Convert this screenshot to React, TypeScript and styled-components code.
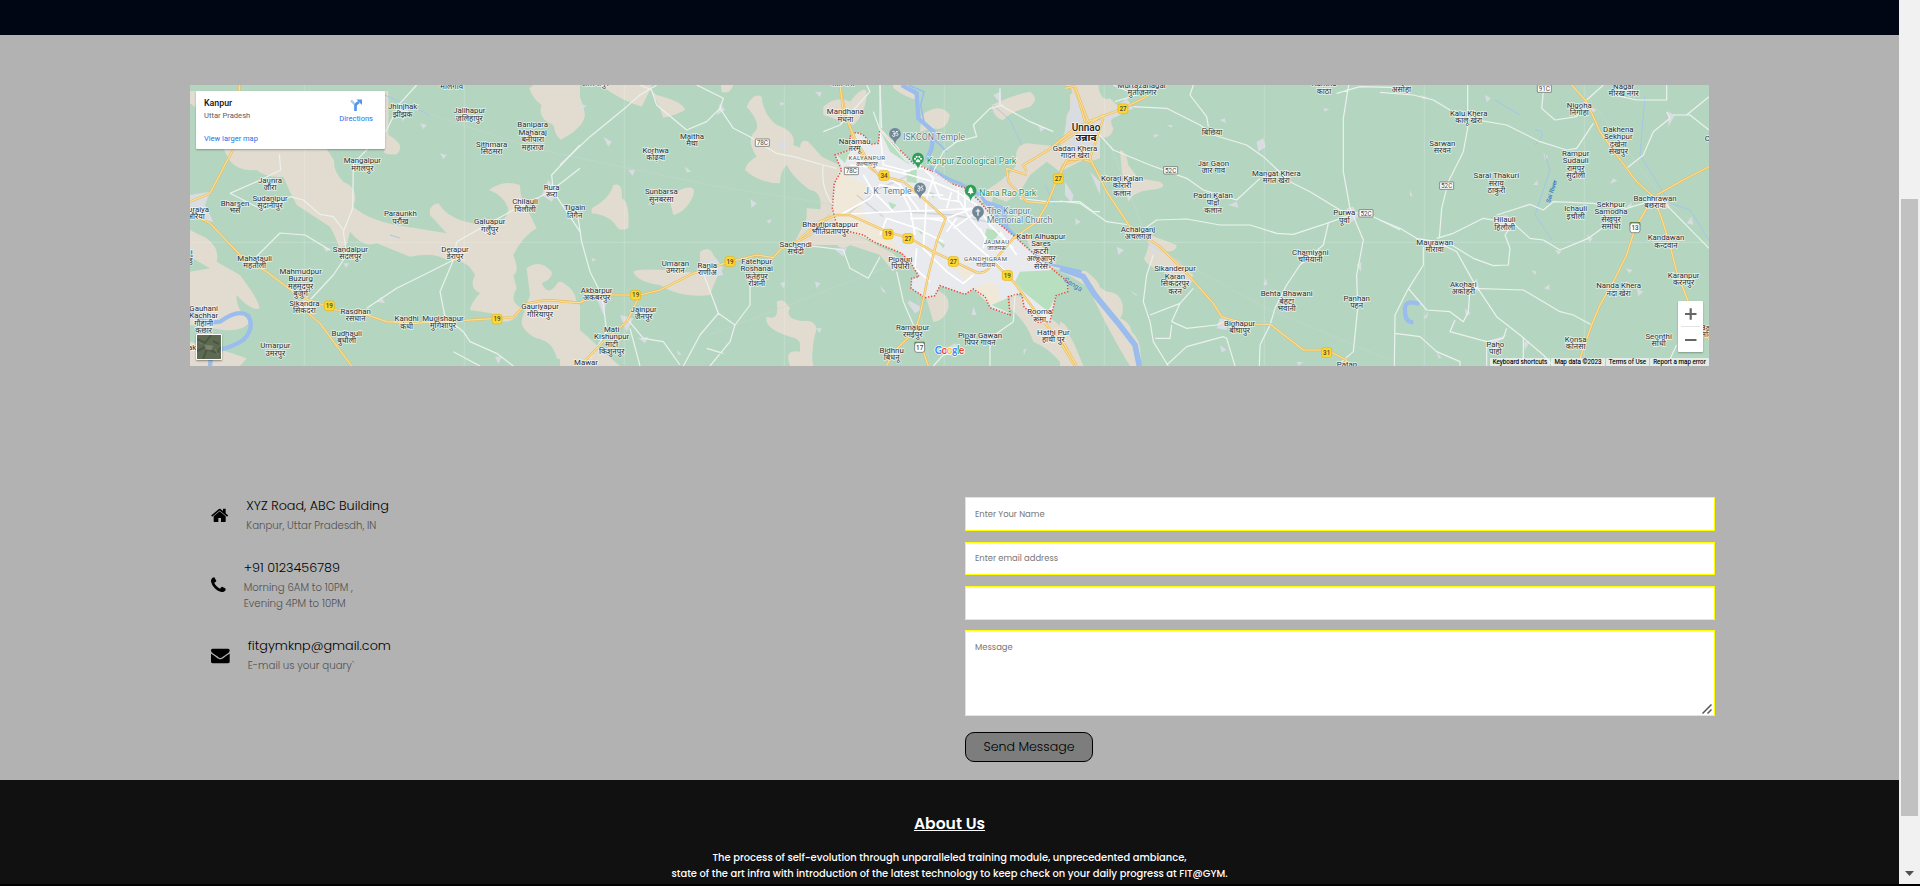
import React from 'react';
import styled, { createGlobalStyle } from 'styled-components';

const GlobalStyle = createGlobalStyle`
  * { box-sizing: border-box; }
  html, body { margin: 0; padding: 0; height: 886px; overflow: hidden; background: #000; }
  body, input, textarea, button {
    font-family: Poppins, Inter, "Liberation Sans", sans-serif;
    font-feature-settings: "cv11";
  }
`;

const Window = styled.div`
  display: grid;
  grid-template-columns: 1899px 21px;
  height: 884px;
  width: 1920px;
  overflow: hidden;
`;
const Page = styled.div`
  background: #b2b2b2;
  height: 884px;
  overflow: hidden;
  display: flex;
  flex-direction: column;
`;
const Hero = styled.div`
  height: 35px;
  flex: none;
  background: #000613;
`;
const Scrollbar = styled.div`
  background: #f1f1f1;
  display: flex;
  flex-direction: column;
  align-items: center;
  justify-content: space-between;
  padding: 199px 0 8px;
  svg { display: block; }
`;
const Thumb = styled.div`
  width: 17px;
  height: 617px;
  background: #c1c1c1;
`;
const MapFrame = styled.section`
  position: relative;
  flex: none;
  width: 1519px;
  height: 281px;
  margin: 50px 0 0 190px;
  overflow: hidden;
`;
const MapSvg = styled.svg`
  display: block;
  font-family: Roboto, "Noto Sans", "Noto Sans Devanagari", sans-serif;
`;
const PlaceCard = styled.div`
  position: absolute;
  left: 6px;
  top: 6px;
  width: 189px;
  height: 58px;
  background: #fff;
  border-radius: 1px;
  box-shadow: 0 1px 2px rgba(0, 0, 0, 0.3);
  padding: 7px 12px 0 8px;
  display: flex;
  justify-content: space-between;
  font-family: Roboto, sans-serif;
`;
const PlaceInfo = styled.div`
  display: flex;
  flex-direction: column;
  font-size: 7.6px;
  line-height: 10px;
  color: #5b5b5b;
`;
const PlaceName = styled.strong`
  font-size: 8.8px;
  line-height: 11px;
  font-weight: 500;
  color: #111;
  margin-bottom: 2px;
`;
const MapLink = styled.a`
  color: #1a73e8;
  font-size: 7.5px;
  line-height: 10px;
`;
const LargerLink = styled(MapLink)`
  margin-top: 13px;
`;
const Directions = styled.div`
  display: flex;
  flex-direction: column;
  align-items: center;
  padding-top: 1px;
  gap: 3px;
  svg { display: block; }
`;
const Satellite = styled.div`
  position: absolute;
  left: 6px;
  top: 249px;
  width: 26px;
  height: 26px;
  border: 1px solid #fff;
  border-radius: 1px;
  box-shadow: 0 1px 2px rgba(0, 0, 0, 0.4);
  svg { display: block; }
`;
const ZoomControl = styled.div`
  position: absolute;
  right: 6px;
  top: 216px;
  width: 25px;
  height: 51px;
  background: #fff;
  border-radius: 1px;
  box-shadow: 0 1px 2px rgba(0, 0, 0, 0.3);
  svg { display: block; }
`;
const Attribution = styled.div`
  position: absolute;
  right: 0;
  bottom: 0;
  height: 8px;
  display: flex;
  gap: 1px;
  font-family: Roboto, sans-serif;
  font-size: 6.3px;
  line-height: 8px;
  color: #000;
  -webkit-text-stroke: 0.1px #000;
  white-space: nowrap;
`;
const AttributionItem = styled.span<{ $w: number }>`
  width: ${(p) => p.$w}px;
  text-align: center;
  background: rgba(245, 245, 245, 0.72);
`;
const Contact = styled.section`
  display: grid;
  grid-template-columns: 775px 750px;
  margin: 129px 0 0 190px;
  height: 285px;
  flex: none;
`;
const Details = styled.div`
  padding: 1px 0 0 21px;
`;
const Detail = styled.div<{ $after: number }>`
  display: flex;
  align-items: center;
  gap: 18px;
  margin-bottom: ${(p) => p.$after}px;
`;
const Glyph = styled.svg`
  display: block;
  height: 18.7px;
  flex: none;
`;
const DetailTitle = styled.h5`
  margin: 0 0 2px;
  font-size: 12.75px;
  line-height: 20px;
  font-weight: 300;
  color: #000;
`;
const DetailText = styled.p`
  margin: 0;
  font-size: 10.2px;
  line-height: 16px;
  font-weight: 300;
  color: #505050;
  white-space: pre;
`;
const Form = styled.form`
  display: flex;
  flex-direction: column;
  align-items: flex-start;
  padding-top: 2px;
`;
const Field = styled.input<{ $h: number; $after: number }>`
  display: block;
  width: 750px;
  height: ${(p) => p.$h}px;
  margin: 0 0 ${(p) => p.$after}px;
  padding: 0 9px;
  border: 1px solid #ff0;
  outline: 0;
  background: #fff;
  font-size: 8.4px;
  &::placeholder { color: #757575; }
`;
const Message = styled.textarea`
  display: block;
  width: 750px;
  height: 86px;
  margin: 0 0 16px;
  padding: 10px 9px;
  border: 1px solid #ff0;
  outline: 0;
  background: #fff;
  font-size: 8.4px;
  line-height: 13px;
  resize: none;
  &::placeholder { color: #757575; }
`;
const MessageBox = styled.div`
  position: relative;
`;
const Grip = styled.svg`
  position: absolute;
  right: 3px;
  top: 74px;
`;
const Send = styled.button`
  width: 128px;
  height: 30px;
  padding: 0;
  border: 1px solid #000;
  border-radius: 9px;
  background: #7d7d7d;
  color: #000;
  font-size: 12.6px;
  font-weight: 300;
`;
const Footer = styled.footer`
  flex: 1;
  background: #111;
  color: #fff;
  text-align: center;
`;
const FooterTitle = styled.h3`
  margin: 31px 0 14px;
  font-size: 15.6px;
  line-height: 25px;
  font-weight: 600;
  text-decoration: underline;
`;
const FooterLine = styled.p`
  margin: 0;
  font-size: 9.92px;
  line-height: 16px;
  font-weight: 500;
`;

type LabelData = [number, number, string];
interface RegionData {
  x: number;
  land: string;
  town: string;
  water: string;
  minor: string;
  major: string;
  labels: LabelData[];
  shields: LabelData[];
}

/* Each region is drawn in units of a third of a pixel from its own left edge. */
const regions: RegionData[] = [
  {
    x: -10,
    land:
      'M30 85L75 118L120 200L140 240Q160 290 230 285Q260 310 310 305L330 350L350 390L450 455Q470 490 478 520L500 510L510 470Q550 520 590 505L690 545Q760 530 800 555Q860 550 885 600Q865 640 900 655Q875 680 870 705L935 715L960 740Q1010 745 1025 700Q985 680 1010 640L1000 600Q1020 590 1000 540Q1030 480 1070 460L1040 400Q1020 370 1020 330Q970 312 927 345Q970 360 985 400Q980 450 920 455L850 438Q800 425 775 385Q745 390 750 420L800 475L680 455Q570 440 520 395Q540 340 490 320Q460 290 462 255L440 222H615Q600 240 650 238Q680 210 625 180V48H30Z' +
      'M1048 40Q1060 75 1085 90Q1070 130 1120 150Q1130 200 1150 190L1200 130V30H1060Z' +
      'M30 465L80 490Q120 520 110 560L180 600Q240 680 238 700Q215 710 170 660Q165 700 210 740Q190 770 130 765L30 750V590L90 580L30 545ZM30 800Q150 830 200 850L180 873H30Z' +
      'M1040 580Q1080 550 1115 590Q1120 610 1085 625Q1105 670 1135 620Q1170 620 1145 655L1200 690V873L1130 850Q1120 800 1070 790Q1010 760 1030 720L1050 660Z',
    town: 'M30 360L90 350L75 390L100 440L30 430ZM655 85L690 95L668 140ZM1105 315L1135 350L1115 380L1085 360ZM350 700L380 660L400 720ZM590 680L605 665L615 685ZM780 235L800 240L790 252ZM720 145L740 150L730 162ZM490 565H508L498 578ZM945 845H965L955 868ZM430 515L455 523L438 530Z',
    water: 'M30 705Q60 750 120 740Q175 700 205 722Q225 760 190 795Q150 820 110 825Q90 840 90 873',
    minor:
      'M710 30L660 85L620 165L540 245L520 270L518 400L490 470L500 540L460 600L390 675L360 700M150 355L250 405L330 365L370 375L420 418L460 425L490 465M150 355L230 320L302 285L298 238M224 550L300 474L375 480L450 525M560 700L650 640L750 590L820 555L830 500L910 455L1000 405L1110 350L1200 280M820 555L780 650L795 725L850 770L870 800L950 835L1000 873M1200 210L1115 300L1120 350L1200 470M820 830L900 873',
    major: 'M178 30V48M160 222L90 355L30 380M60 430L90 445L190 550L260 590L360 665L470 705L540 712L620 740L700 745L1000 727L1040 685L1100 675L1200 683M385 715L420 745L515 873',
    labels: [[815,35,'मलिगांव'],[668,95,'Jhinjhak|झींझक'],[868,107,'Jalihapur|जलिहापुर'],[1058,149,'Banipara|Maharaj|बनीपारा|महाराज'],[935,208,'Sithmara|सिठमरा'],[547,257,'Mangalpur|मंगलपुर'],[270,315,'Jaunra|जौंरा'],[270,369,'Sudanipur|सुदानीपुर'],[165,384,'Bharsen|भर्सें'],[48,403,'Auraiya|औरैया'],[1115,336,'Rura|रूरा'],[1035,380,'Chilauli|चिलौली'],[661,416,'Paraunkh|परौंख'],[929,440,'Galuapur|गलुँपुर'],[511,522,'Sandalpur|संदलपुर'],[825,523,'Derapur|डेरापुर'],[224,550,'Mahatauli|महतौली'],[362,588,'Mahmudpur|Buzurg|महमूदपुर|बुजुर्ग'],[373,685,'Sikandra|सिकंदरा'],[527,708,'Rasdhan|रसधान'],[680,731,'Kandhi|कंधी'],[789,729,'Mugishapur|मुगिशापुर'],[1080,695,'Gauriyapur|गौरियापुर'],[500,775,'Budhauli|बुधौली'],[286,812,'Umarpur|उमरपुर'],[71,700,'Gauhani|Kachhar|गौहानी|कछार'],[32,532,'ji|हुँ'],[36,817,'ak']],
    shields: [[448,692,'19'],[951,732,'19']],
  },
  {
    x: 370,
    land:
      'M120 30Q190 80 245 95L270 45L290 60Q370 80 375 105Q350 120 310 128Q290 70 270 45L275 30Z' +
      'M0 30H35Q70 70 75 120Q70 160 0 195ZM483 30H520Q510 60 485 50Z' +
      'M560 95Q580 50 605 65Q610 120 650 150Q710 170 700 210Q780 240 825 265Q850 270 850 300L820 410L740 430Q745 390 780 415Q790 350 750 345Q700 310 680 270Q660 290 660 325Q600 325 555 285Q560 260 590 245Q560 200 580 175Q610 150 560 95Z' +
      'M720 215Q725 190 745 200L790 250L740 245Z' +
      'M740 400L820 405V440L870 470L1000 535L1020 560L1000 590L960 540L870 510Q850 530 830 510L700 510L740 430Z' +
      'M790 95Q830 60 870 80Q910 30 920 50Q920 110 880 150L790 120ZM1000 30H1045L1075 75Q1040 70 1000 40ZM1085 120Q1140 80 1170 120Q1160 170 1120 160L1080 170Z' +
      'M95 400Q150 370 160 330Q190 320 185 370Q210 380 205 460Q180 470 170 455Q150 420 95 415ZM260 390Q300 370 360 345Q410 325 400 360Q380 410 340 420L330 380Z' +
      'M420 530Q450 510 460 540L490 580Q470 600 450 660Q360 670 300 630Q230 620 220 590Q240 575 420 595Z' +
      'M650 680Q670 665 690 700Q670 735 740 740Q780 760 760 780Q760 850 740 873H690Q670 820 720 830Q730 790 690 785Q610 760 620 725Q660 740 650 680Z' +
      'M0 620Q50 640 50 690Q30 740 0 700ZM0 730Q40 740 130 830L180 873H0ZM1090 640Q1170 660 1165 700Q1150 740 1120 740Z',
    town: 'M480 85L495 105L470 120ZM420 560L470 550L490 600L430 610ZM820 520L860 520L850 545ZM180 720L220 730L200 770ZM110 670L140 680L130 720ZM235 790L265 785L255 805ZM130 185L155 200L145 215ZM205 285H225L218 302ZM55 85L80 92L60 105ZM765 50L785 52L780 66ZM620 438L635 432L628 446ZM572 372L590 386L574 398ZM660 80L675 86L662 92ZM650 200H680V218H655ZM735 445L790 430V470L730 490ZM375 275L395 290L380 292ZM1045 675L1090 700L1065 715ZM960 630L980 655L968 650ZM770 760H785L778 775ZM350 825L365 838L355 840ZM660 625L675 620L672 640ZM95 548L108 555L98 560Z',
    water: '',
    minor:
      'M0 270L90 185L200 95L240 60L290 30M240 30L275 45L290 90L380 165L440 140L480 100L490 70L410 30M480 100L520 160L570 185L615 215L650 235L700 245L790 270L830 280M790 270Q780 340 820 390M50 400L65 500L90 590L115 640L130 690L140 770L90 850M700 510L770 515L850 525L870 580L925 610L960 545M430 595L475 715L525 750L570 690V620M475 715L420 780L370 873M525 750L510 800L450 873M200 730L250 790L310 800L360 870M440 820L490 835M210 760L240 873M940 110L960 165L1040 260M960 30L965 160',
    major: 'M840 30L855 110L880 190L920 270L945 290M0 680L60 683L110 660L240 660L300 645L400 595L500 563L590 540L640 548L660 525L750 480L810 420M235 670L200 740L130 800L60 873',
    labels: [[105,26,'अलियापुर'],[396,183,'Maitha|मैथा'],[287,225,'Korhwa|कोढ़वा'],[304,350,'Sunbarsa|सुनबरसा'],[44,398,'Tigain|तिगैन'],[811,448,'Bhautipratappur|भौंतिप्रतापपुर'],[707,507,'Sachendi|सचेंदी'],[346,565,'Umaran|उमरान'],[442,571,'Rania|राणीअ'],[590,559,'Fatehpur|Roshanai|फ़तेहपुर|रोशनी'],[110,646,'Akbarpur|अकबरपुर'],[251,702,'Jainpur|जैनपुर'],[155,762,'Mati|Kishunpur|माटी|किशुनपुर'],[78,861,'Mawar']],
    shields: [[510,559,'19'],[227,660,'19'],[607,203,'78C']],
  },
  {
    x: 610,
    land:
      'M575 90Q640 60 690 50Q720 70 690 95Q630 110 610 135Q580 130 575 90Z' +
      'M560 345Q620 310 650 270Q640 210 680 205L780 215L800 150Q790 110 830 90L810 30H880L900 90V250L870 260L860 250L780 290L740 260L690 300L660 350L620 380L590 370Z' +
      'M530 365L580 360L570 410ZM680 490Q740 510 770 570L860 590Q900 620 900 640L870 640L790 590L700 560ZM0 740Q40 730 50 760Q30 830 40 873H0ZM630 650Q700 680 800 770L820 800L850 873H790Q750 820 700 800Q680 740 630 700ZM400 640Q450 660 445 690Q440 730 405 740Z',
    town: 'M800 160L830 80L900 110V220L830 210ZM870 290L900 320V360ZM610 310L620 300L640 350ZM320 680L350 690L345 715ZM520 695L530 720L515 720ZM440 820L465 805L490 835ZM580 60L600 50L605 90ZM45 620L62 625L50 640ZM715 150L735 160L722 172ZM670 825L680 820L672 840Z',
    water: '',
    minor:
      'M610 90L570 100L520 150L530 185L470 200L430 230L400 290M200 30L210 50L120 150L70 170M240 30V160L300 225M400 290L520 375M600 40V90L690 140L760 170M660 370L740 380L840 380L880 410H900M290 590L310 680L340 750M645 660L640 740L570 790V873M480 830L430 840L400 873',
    major: 'M120 30L130 110L165 190L215 275L235 300L310 320L370 370L437 430L410 500L385 600L360 720L345 770L280 830L260 873M0 490L60 440L110 420L150 420L260 470L330 490L400 530L530 592Q560 600 580 560L640 490L710 440L740 390L790 270L840 250L870 260L900 300M680 300L620 280L625 320L680 380L735 385M580 560L640 620L715 720L780 800L825 873M370 830L385 873M680 290L670 270L745 225L830 155L900 130M820 30L835 70L855 140M795 40L820 35',
    labels: [[125,26,'भातापारा'],[136,110,'Mandhana|मंधना'],[164,198,'Naramau|नरमू'],[301,552,'Pipauri|पिपौरी'],[338,757,'Ramaipur|रमईपुर'],[275,826,'Bidhnu|बिधनू'],[825,219,'Gadan Khera|गादन खेरा'],[723,483,'Katri Alhuapur|Sares|कटरी|अल्हुआपुर|सरेस'],[719,710,'Rooma|रूमा'],[760,772,'Hathi Pur|हाथी पुर'],[540,780,'Pipar Gawan|पिपर गांवन']],
    shields: [[252,301,'34'],[264,477,'19'],[324,490,'27'],[460,559,'27'],[622,601,'19'],[775,311,'27'],[154,288,'78C'],[359,817,'17']],
  },
  {
    x: 870,
    land:
      'M60 30H115Q120 80 150 70L180 100Q140 130 160 160Q155 195 120 185L100 230L60 260L30 240V60ZM180 225Q200 230 205 270L235 310L300 320Q330 340 270 345Q220 350 205 380Q185 320 180 225Z' +
      'M270 480L350 510Q350 530 320 530L400 600L390 620L340 600Q260 580 252 550Q265 530 270 480ZM0 578L80 590Q90 620 140 650Q180 650 188 690Q190 720 180 730Q210 740 215 770Q250 800 240 873H210Q170 810 110 690L75 620L0 590ZM0 740Q30 750 30 800L60 873H0Z',
    town: 'M15 160L40 60L70 90L85 140L150 110L200 70L220 100L160 130L120 150L90 250L40 230ZM255 480L300 510L280 540ZM590 200L610 190L617 215L595 230ZM505 390L530 380L535 398ZM860 400L880 395L895 425L870 445ZM380 600L400 610L390 630ZM15 320L40 360L35 385L15 360ZM890 570L905 560L903 590ZM480 730H500V765L470 760ZM480 810L500 825L485 832ZM320 150L338 150L334 158ZM280 178L298 180L283 188ZM170 515L192 525L175 540ZM45 430L62 440L48 450ZM610 630L618 610L622 630ZM790 100L808 102L795 110ZM480 135L495 130L497 145ZM210 645L235 662L225 660ZM710 860L730 862L716 872Z',
    water: '',
    minor:
      'M220 95L320 100L420 150L460 180L560 210L610 245L690 320L750 350L840 405L930 420L1020 465M400 30L390 60L440 125L445 155M110 170L160 225L270 270L380 310L430 345L530 375L600 310M0 378L60 385L140 440L210 450M240 470L290 435L380 432L480 450L570 450L650 475L700 478L800 445L870 420M866 30L850 130V290L870 400L910 495L890 600L893 700L880 830L830 873M805 445L790 510L720 570L680 630L645 700L630 750L600 810L598 873M280 540L260 600L250 680L270 740L280 800L325 873M400 640L360 685L270 720M360 685L335 740L380 760L470 750L490 740M285 790L330 790L335 750M320 870L380 815L490 785L500 790L525 873M830 55L900 35L1020 38M165 80L230 60L160 30',
    major: 'M15 30L45 35L85 140L190 100L250 70L300 35M0 205L60 165L130 120M130 130L90 250L20 255L0 300M90 250L140 350L210 455L300 515L380 595L460 685L485 725L560 747L630 748L730 825L800 825L860 855L850 873M0 785L50 873',
    labels: [[246,30,'Murtazanagar|मुर्ताज़नगर'],[456,172,'बिछिया'],[460,264,'Jar Gaon|जार गांव'],[649,295,'Mangat Khera|मंगत खेरा'],[186,309,'Korari Kalan|कोरारी|कलान'],[459,360,'Padri Kalan|पाद्री|कलान'],[853,413,'Purwa|पूर्वा'],[234,462,'Achalganj|अचलगंज'],[751,532,'Chamiyani|चमियानी'],[345,581,'Sikanderpur|Karan|सिकंदरपुर|करन'],[680,656,'Behta Bhawani|बेहटा|भवानी'],[890,669,'Panhan|पंहन'],[539,745,'Bighapur|बीघापुर'],[861,868,'Patan'],[792,26,'Kantha|कांठा']],
    shields: [[189,101,'27'],[800,832,'31'],[332,286,'52C'],[918,415,'52C']],
  },
  {
    x: 1190,
    land: '',
    town: 'M865 110L885 120L865 155ZM620 90L650 105L635 115ZM800 380L860 370L870 400L800 400ZM920 445L935 425L940 450ZM740 395L755 380V400ZM165 500H215L190 515ZM270 640L290 610L300 650ZM340 430L380 420L405 450L365 470ZM620 480L638 490L628 503ZM525 525L545 528L535 540ZM255 700L272 715L258 725ZM320 800L380 780L350 805ZM430 800H450L435 825ZM170 830L185 850L175 850ZM315 60L332 70L320 82ZM490 235L505 245L495 255ZM90 345L98 365L90 362ZM738 580L758 585L748 595ZM455 585L470 590L465 600ZM770 640L790 650L775 663ZM492 640L508 628V645ZM700 310L712 318L690 326ZM120 60L145 68L130 72ZM460 330L472 315L474 330ZM130 730L145 710L140 730Z',
    water: 'M118 687Q70 670 75 710Q75 740 100 742',
    minor:
      'M0 52L100 60L160 75L210 105M263 30V160L250 230L205 320L185 400L178 490M0 435L60 460L110 490L170 500L230 530L280 620L350 725L420 780L490 840L520 873M263 130L380 150L480 200L560 225L590 220L640 145M490 50L485 100L525 135L590 125L620 75L670 30M700 60L770 75L860 75V30M860 110L870 130L820 170L790 240L740 280M987 165L930 120L880 120M987 65L920 120M215 510L280 550L340 572L385 570L390 520L375 480L400 445L450 490L490 495L540 525L625 490L680 450M400 445L310 430L220 475L170 490M350 420L450 388L490 405L520 380L640 385L740 400L840 370L987 520M130 515V570L80 650L45 720L43 873M85 640L140 705L210 710L250 740L265 710L270 640M225 735L210 770L320 800L370 790L380 760M280 640L430 645L490 680L540 710L580 720L635 750M45 775L120 785L170 830L240 860V873M320 800V873M430 790V873M860 873L890 810',
    major: 'M575 30L620 80L660 170L710 240L770 320L820 365L845 430L870 510L890 590L925 680L987 795M830 360L900 320L987 275M800 400L765 460L740 540L700 620L660 690L635 750L600 850M590 873L605 850',
    labels: [[64,44,'असोहा'],[266,114,'Kalu Khera|कालू खेरा'],[187,205,'Sarwan|सरवन'],[349,302,'Sarai Thakuri|सराय|ठाकुरी'],[598,91,'Nigoha|निगोहां'],[731,34,'Nagar|मीरख नगर'],[715,163,'Dakhena|Sekhpur|दखेना|सेखपुर'],[587,235,'Rampur|Sudauli|रामपुर|सुदौली'],[825,370,'Bachhrawan|बछरावां'],[587,401,'Ichauli|इचौली'],[693,388,'Sekhpur|Samodha|सेखपुर|समोधा'],[374,434,'Hilauli|हिलौली'],[164,502,'Maurawan|मौरावां'],[858,488,'Kandawan|कन्दवान'],[911,600,'Karanpur|करनपुर'],[250,627,'Akohari|अकोहरी'],[716,632,'Nanda Khera|नंदा खेरा'],[346,808,'Paho|पाहो'],[587,793,'Konsa|कोनसा'],[836,783,'Seonthi|सोंधी'],[980,757,'Bar|मदि'],[982,190,'C']],
    shields: [[493,41,'91C'],[200,332,'52C'],[765,458,'13']],
  },
];

const CITY =
  'M150 185Q160 165 190 180L215 207L235 205L240 162L285 210L340 265L400 290L450 325L500 340L540 380L590 440L650 490L700 535L760 585L803 620V650L768 662L750 740L715 742L672 695L665 655L625 665L630 720L570 698L555 665L520 642L495 658L420 632L405 662L375 668L333 640L335 610L357 605L330 560L305 535L220 500L190 480L150 470L110 450L97 400L103 325L125 285L105 240L150 225Z';

const at = (x: number) => `translate(${x} -10) scale(0.33333)`;

function Label({ data }: { data: LabelData }) {
  const [x, y, text] = data;
  return (
    <text textAnchor="middle" fontSize="23.5" fill="#2c2f32" stroke="#fff" strokeOpacity=".65" strokeWidth="4.5" paintOrder="stroke">
      {text.split('|').map((line, i) => (
        <tspan key={i} x={x} y={y + 8 + i * 22.5}>{line}</tspan>
      ))}
    </text>
  );
}

function Shield({ data }: { data: LabelData }) {
  const [x, y, text] = data;
  const state = text.length > 2;
  const white = state || text === '17' || text === '13';
  return (
    <g>
      {!state && white && <rect x={x - 16} y={y - 17} width="32" height="14" rx="4" fill="#5c8a3c" />}
      <rect
        x={x - (state ? 21 : 15)}
        y={y - (state ? 11 : 14)}
        width={state ? 42 : 30}
        height={state ? 22 : 29}
        rx={state ? 1 : 7}
        fill={white ? '#fff' : '#fdd835'}
        stroke={white ? '#777' : '#e6b821'}
        strokeWidth="2.5"
      />
      <text x={x} y={y + 7} fontSize="19" fontWeight={state ? 400 : 500} textAnchor="middle" fill="#4b4733">{text}</text>
    </g>
  );
}

function Pin({ x, y, color, kind }: { x: number; y: number; color: string; kind: string }) {
  return (
    <g transform={`translate(${x} ${y})`}>
      <path d="M0 31Q-3 16 -13 11A18 18 0 1 1 13 11Q3 16 0 31Z" fill={color} stroke="#fff" strokeOpacity=".5" strokeWidth="1" />
      {kind === 'om' && <path d="M-8 -8Q-2 -12 0 -6Q0 -1 -5 -2Q2 0 0 5Q-5 9 -9 3M0 -2Q8 -8 9 1Q7 6 4 3M3 -9Q7 -6 10 -10" fill="none" stroke="#fff" strokeWidth="2.6" />}
      {kind === 'paw' && <path d="M0 0Q7 3 7 8Q0 11 -7 8Q-7 3 0 0ZM-9 -4a3 3 0 1 0 .1 0M9 -4a3 3 0 1 0 .1 0M-4 -10a3 3 0 1 0 .1 0M4 -10a3 3 0 1 0 .1 0" fill="#fff" />}
      {kind === 'tree' && <path d="M0 -12Q8 -6 6 0L9 6H2V10H-2V6H-9L-6 0Q-8 -6 0 -12Z" fill="#fff" />}
      {kind === 'cross' && <path d="M0 -11V10M-7 -4H7" stroke="#fff" strokeWidth="3.5" />}
    </g>
  );
}

function CityMap() {
  return (
    <MapSvg width="1519" height="281" viewBox="0 0 1519 281">
      <rect width="1519" height="281" fill="#b4d6c1" />
      {regions.map((r) => (
        <g key={r.x} transform={at(r.x)}>
          <path d={r.land} fill="#e1dccf" />
          <path d={r.town} fill="#d9dce0" />
          <path d={r.water} fill="none" stroke="#9bbdee" strokeWidth="13" />
        </g>
      ))}
      {[114.3, 274.3, 434.3, 594.3, 754.3, 914.3, 1074.3, 1234.3, 1394.3].map((x) => (
        <path key={x} d={`M${x} 0V281`} stroke="#fff" strokeOpacity=".2" />
      ))}
      <path d="M0 157.3H1519" stroke="#fff" strokeOpacity=".2" />
      <g fill="none" stroke="#cbd5ce" strokeWidth="0.5">
        <path d="M180 10L350 65L520 100L690 127M520 250L690 185L790 157M720 168L740 281M920 60L960 160L1080 225L1200 275M1390 0L1470 110L1519 150" />
      </g>
      <g fill="none" stroke="#a3c4ea" strokeWidth="0.9">
        <path d="M1455 10L1450 70L1480 118L1500 125L1519 155M1305 15L1330 30M1345 45Q1360 45 1345 60M1355 70L1360 85L1345 130L1362 155M190 8L240 30M803 20L820 35L832 60M200 150L210 153M855 100L865 120" />
      </g>
      <g transform={at(610)} fill="none" stroke="#9bbdee">
        <path d="M305 30L350 55L355 130L400 170L395 220L380 255" strokeWidth="13" />
        <path d="M325 30L372 50L362 90L372 140M400 190L440 230" strokeWidth="5" />
        <path d="M390 275Q430 310 480 325L540 360L580 410L640 490L700 545" strokeWidth="10" />
        <path d="M550 380L610 400L620 460L650 490" strokeWidth="13" />
        <path d="M690 530L750 568L845 590" strokeWidth="8" />
      </g>
      <g transform={at(870)}>
        <path d="M0 580L70 605L105 660L175 745L225 810L238 873" fill="none" stroke="#9bbdee" strokeWidth="17" />
      </g>
      <g transform={at(610)}>
        <path d={CITY} fill="#e8eaed" />
        <path d="M115 290L200 330L180 410L260 470L300 530L220 500L150 470L100 440L97 400ZM520 642L570 620Q600 630 600 680L570 690ZM440 560L520 590L500 620Z" fill="#f0e8d8" />
        <path d="M240 165L285 210L330 270L270 230ZM110 240L150 228L135 265ZM320 285L350 280V325L320 320ZM560 460L600 470L580 500L550 500ZM660 590L760 585L803 620V650L768 662L745 710L670 650L645 620ZM575 690L625 668L628 715ZM350 460L370 465L365 480ZM410 495L435 510L430 520ZM265 380L290 390L275 405ZM385 350L405 355L400 370Z" fill="#b9dfc1" />
        <path d="M100 420L300 410L460 420L560 440M140 420L240 340L330 300M170 360L250 425" fill="none" stroke="#cfd2d8" strokeWidth="4" />
        <g fill="none" stroke="#fff" strokeWidth="5">
          <path d="M150 270L250 280L330 300L400 320L470 350L530 390L570 450L640 520M110 420L240 412L430 405L520 400M360 270L400 310L380 370L370 520L440 590L490 625L520 600M120 420L210 370L240 330L300 340L330 400L345 480M250 300L300 330L360 410M430 500L350 460L260 430M440 430L490 480L560 540L630 600M400 320L420 370L480 380L510 430L560 490M470 430L440 470M380 280L350 280L310 290M440 430L520 400M460 460L530 410M260 430L240 480M350 520L345 580L390 620M540 460L555 490L550 520M190 300L220 350L280 410M600 470L650 540M300 360H430M330 430H430M475 330V380M495 350V400M385 430L440 440M455 350L440 400" />
          <path d="M240 170L250 270L330 290" strokeWidth="4" />
        </g>
        <path d={CITY} fill="none" stroke="#e64a3c" strokeWidth="4.5" strokeDasharray="4 5" />
      </g>
      {regions.map((r) => (
        <g key={r.x} transform={at(r.x)} fill="none" strokeLinejoin="round">
          <path d={r.minor} stroke="#ebf1ed" strokeWidth="3.6" />
          <path d={r.major} stroke="#e8ba5c" strokeWidth="7" />
          <path d={r.major} stroke="#fbdf98" strokeWidth="3.6" />
        </g>
      ))}
      {regions.map((r) => (
        <g key={r.x} transform={at(r.x)}>
          {r.labels.map((l) => <Label key={l.join()} data={l} />)}
          {r.shields.map((l) => <Shield key={l.join()} data={l} />)}
        </g>
      ))}
      <g transform={at(610)} stroke="#fff" strokeOpacity=".8" strokeWidth="4" paintOrder="stroke">
        <g textAnchor="middle" fill="#222" fontWeight="500">
          <text x="858" y="167" fontSize="30">Unnao</text>
          <text x="858" y="197" fontSize="30" fontWeight="700">उन्नाव</text>
        </g>
        <g textAnchor="middle" fill="#4d5156" fontSize="18" letterSpacing="1.3">
          <text x="201" y="256">KALYANPUR</text>
          <text x="201" y="273" letterSpacing="0">कल्यानपुर</text>
          <text x="590" y="508">JAJMAU</text>
          <text x="590" y="525" letterSpacing="0">जाजमऊ</text>
          <text x="557" y="559">GANDHIGRAM</text>
          <text x="557" y="576" letterSpacing="0">गांधीग्राम</text>
        </g>
        <g fontSize="26.5" fill="#5f7a8c">
          <text x="309" y="195" textLength="186">ISKCON Temple</text>
          <text x="192" y="357" textLength="143">J. K. Temple</text>
          <text x="560" y="416" textLength="131">The Kanpur</text>
          <text x="560" y="443" textLength="197">Memorial Church</text>
        </g>
        <g fontSize="26.5" fill="#269351">
          <text x="380" y="268" textLength="269">Kanpur Zoological Park</text>
          <text x="537" y="363" textLength="172">Nana Rao Park</text>
        </g>
        <text transform="translate(790 618) rotate(32)" fontSize="21" fill="#3c78c8" strokeWidth="0">Ganga</text>
      </g>
      <g transform={at(1190)}>
        <text transform="translate(510 384) rotate(-72)" fontSize="18" fontWeight="500" fill="#2f72c4">Sai River</text>
      </g>
      <g transform={at(610)}>
        <Pin x={285} y={178} color="#6f8797" kind="om" />
        <Pin x={354} y={252} color="#2f9e58" kind="paw" />
        <Pin x={360} y={342} color="#6f8797" kind="om" />
        <Pin x={512} y={348} color="#2f9e58" kind="tree" />
        <Pin x={534} y={412} color="#6f8797" kind="cross" />
        <text x="404" y="836" fontSize="31" fontFamily="Lato, sans-serif" fontWeight="700" textLength="89" stroke="#fff" strokeWidth="4" paintOrder="stroke">
          <tspan fill="#4285f4">G</tspan><tspan fill="#ea4335">o</tspan><tspan fill="#fbbc05">o</tspan>
          <tspan fill="#4285f4">g</tspan><tspan fill="#34a853">l</tspan><tspan fill="#ea4335">e</tspan>
        </text>
      </g>
    </MapSvg>
  );
}

const HOME =
  'M1408 992v480q0 26-19 45t-45 19h-384v-384h-256v384h-384q-26 0-45-19t-19-45v-480q0-1 .5-3t.5-3l575-474 575 474q1 2 1 6zm223-69l-62 74q-8 9-21 11h-3q-13 0-21-7l-692-577-692 577q-12 8-24 7-13-2-21-11l-62-74q-8-10-7-23.5t11-21.5l719-599q32-26 76-26t76 26l244 204v-195q0-14 9-23t23-9h192q14 0 23 9t9 23v408l219 182q10 8 11 21.5t-7 23.5z';
const PHONE =
  'M1408 1240q0 27-10 70.5t-21 68.5q-21 50-122 106-94 51-186 51-27 0-53-3.5t-57.5-12.5-47-14.5-55.5-20.5-49-18q-98-35-175-83-127-79-264-216t-216-264q-48-77-83-175-3-9-18-49t-20.5-55.5-14.5-47-12.5-57.5-3.5-53q0-92 51-186 56-101 106-122 25-11 68.5-21t70.5-10q14 0 21 3 18 6 53 76 11 19 30 54t35 63.5 31 53.5q3 4 17.5 25t21.5 35.5 7 28.5q0 20-28.5 50t-62 55-62 53-28.5 46q0 9 5 22.5t8.5 20.5 14 24 11.5 19q76 137 174 235t235 174q2 1 19 11.5t24 14 20.5 8.5 22.5 5q18 0 46-28.5t53-62 55-62 50-28.5q14 0 28.5 7t35.5 21.5 25 17.5q25 15 53.5 31t63.5 35 54 30q70 35 76 53 3 7 3 21z';
const MAIL =
  'M1792 710v794q0 66-47 113t-113 47h-1472q-66 0-113-47t-47-113v-794q44 49 101 87 362 246 497 345 57 42 92.5 65.5t94.5 48 110 24.5h2q51 0 110-24.5t94.5-48 92.5-65.5q170-123 498-345 57-39 100-87zm0-294q0 79-49 151t-122 123q-376 261-468 325-10 7-42.5 31t-54 38.5-52 32.5-57.5 27-50 9h-2q-23 0-50-9t-57.5-27-52-32.5-54-38.5-42.5-31q-91-64-262-182.5t-205-142.5q-62-42-117-115.5t-55-136.5q0-78 41.5-130t118.5-52h1472q65 0 112.5 47t47.5 113z';

export default function App() {
  return (
    <>
      <GlobalStyle />
      <Window>
        <Page>
          <Hero />
          <MapFrame>
            <CityMap />
            <PlaceCard>
              <PlaceInfo>
                <PlaceName>Kanpur</PlaceName>
                Uttar Pradesh
                <LargerLink>View larger map</LargerLink>
              </PlaceInfo>
              <Directions>
                <svg width="12" height="12" viewBox="0 0 12 12">
                  <path d="M1 1.5L5.5 6" stroke="#a9cbf3" strokeWidth="2.4" fill="none" />
                  <path d="M5.5 12V7Q5.5 5 9 3.2" stroke="#4f95e8" strokeWidth="2.6" fill="none" />
                  <path d="M6.5 .5H12V6Z" fill="#4f95e8" />
                </svg>
                <MapLink>Directions</MapLink>
              </Directions>
            </PlaceCard>
            <Satellite>
              <svg width="24" height="24" viewBox="0 0 24 24">
                <rect width="24" height="24" fill="#5d6a51" />
                <path d="M0 4L8 8L14 0M6 24L10 14L20 18L24 12M0 16L8 12M16 6L22 9" stroke="#4a5842" strokeWidth="2" fill="none" />
                <path d="M8 10L16 11L14 15L9 14ZM2 7L5 9M18 14L21 20" stroke="#747e68" fill="#7d8371" />
              </svg>
            </Satellite>
            <ZoomControl>
              <svg width="25" height="51" viewBox="0 0 25 51">
                <path d="M7 13H18.500M12.700 7.200V18.800M7 39H18.500" stroke="#666" strokeWidth="2.2" />
                <path d="M3 25.500H22" stroke="#e3e3e3" />
              </svg>
            </ZoomControl>
            <Attribution>
              <AttributionItem $w={60}>Keyboard shortcuts</AttributionItem>
              <AttributionItem $w={54}>Map data ©2023</AttributionItem>
              <AttributionItem $w={43}>Terms of Use</AttributionItem>
              <AttributionItem $w={59}>Report a map error</AttributionItem>
            </Attribution>
          </MapFrame>
          <Contact>
            <Details>
              <Detail $after={24}>
                <Glyph viewBox="0 0 1664 1792"><path d={HOME} /></Glyph>
                <div>
                  <DetailTitle>XYZ Road, ABC Building</DetailTitle>
                  <DetailText>Kanpur, Uttar Pradesdh, IN</DetailText>
                </div>
              </Detail>
              <Detail $after={24}>
                <Glyph viewBox="0 0 1408 1792"><path d={PHONE} /></Glyph>
                <div>
                  <DetailTitle>+91 0123456789</DetailTitle>
                  <DetailText>{'Morning 6AM to 10PM ,\nEvening 4PM to 10PM'}</DetailText>
                </div>
              </Detail>
              <Detail $after={0}>
                <Glyph viewBox="0 0 1792 1792"><path d={MAIL} /></Glyph>
                <div>
                  <DetailTitle>fitgymknp@gmail.com</DetailTitle>
                  <DetailText>E-mail us your quary`</DetailText>
                </div>
              </Detail>
            </Details>
            <Form>
              <Field $h={34} $after={11} placeholder="Enter Your Name" />
              <Field $h={33} $after={11} placeholder="Enter email address" />
              <Field $h={34} $after={10} />
              <MessageBox>
                <Message placeholder="Message" />
                <Grip width="10" height="10" viewBox="0 0 10 10">
                  <path d="M.5 9.500L9.500 .5M5.500 9.500L9.500 5.500" stroke="#555" strokeWidth="1.5" />
                </Grip>
              </MessageBox>
              <Send type="button">Send Message</Send>
            </Form>
          </Contact>
          <Footer>
            <FooterTitle>About Us</FooterTitle>
            <FooterLine>The process of self-evolution through unparalleled training module, unprecedented ambiance,</FooterLine>
            <FooterLine>state of the art infra with introduction of the latest technology to keep check on your daily progress at FIT@GYM.</FooterLine>
          </Footer>
        </Page>
        <Scrollbar>
          <Thumb />
          <svg width="9" height="5" viewBox="0 0 9 5"><path d="M0 0H9L4.500 5Z" fill="#505050" /></svg>
        </Scrollbar>
      </Window>
    </>
  );
}
